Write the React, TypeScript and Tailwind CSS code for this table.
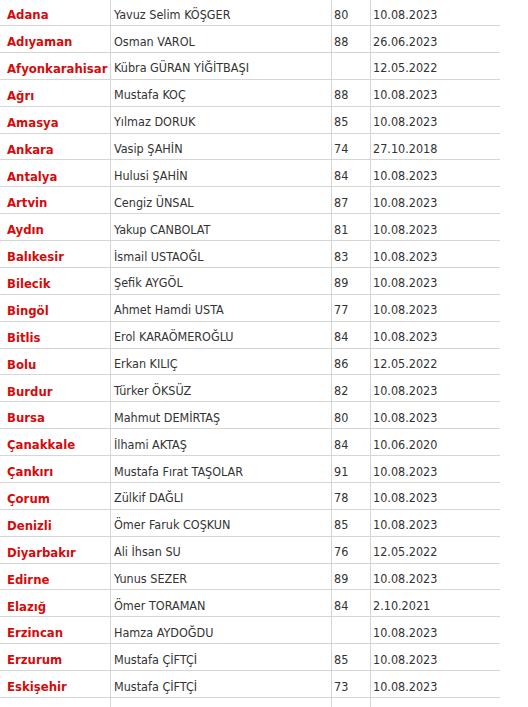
const rows: [string, string, string, string][] = [
  ['Adana', 'Yavuz Selim KÖŞGER', '80', '10.08.2023'],
  ['Adıyaman', 'Osman VAROL', '88', '26.06.2023'],
  ['Afyonkarahisar', 'Kübra GÜRAN YİĞİTBAŞI', '', '12.05.2022'],
  ['Ağrı', 'Mustafa KOÇ', '88', '10.08.2023'],
  ['Amasya', 'Yılmaz DORUK', '85', '10.08.2023'],
  ['Ankara', 'Vasip ŞAHİN', '74', '27.10.2018'],
  ['Antalya', 'Hulusi ŞAHİN', '84', '10.08.2023'],
  ['Artvin', 'Cengiz ÜNSAL', '87', '10.08.2023'],
  ['Aydın', 'Yakup CANBOLAT', '81', '10.08.2023'],
  ['Balıkesir', 'İsmail USTAOĞL', '83', '10.08.2023'],
  ['Bilecik', 'Şefik AYGÖL', '89', '10.08.2023'],
  ['Bingöl', 'Ahmet Hamdi USTA', '77', '10.08.2023'],
  ['Bitlis', 'Erol KARAÖMEROĞLU', '84', '10.08.2023'],
  ['Bolu', 'Erkan KILIÇ', '86', '12.05.2022'],
  ['Burdur', 'Türker ÖKSÜZ', '82', '10.08.2023'],
  ['Bursa', 'Mahmut DEMİRTAŞ', '80', '10.08.2023'],
  ['Çanakkale', 'İlhami AKTAŞ', '84', '10.06.2020'],
  ['Çankırı', 'Mustafa Fırat TAŞOLAR', '91', '10.08.2023'],
  ['Çorum', 'Zülkif DAĞLI', '78', '10.08.2023'],
  ['Denizli', 'Ömer Faruk COŞKUN', '85', '10.08.2023'],
  ['Diyarbakır', 'Ali İhsan SU', '76', '12.05.2022'],
  ['Edirne', 'Yunus SEZER', '89', '10.08.2023'],
  ['Elazığ', 'Ömer TORAMAN', '84', '2.10.2021'],
  ['Erzincan', 'Hamza AYDOĞDU', '', '10.08.2023'],
  ['Erzurum', 'Mustafa ÇİFTÇİ', '85', '10.08.2023'],
  ['Eskişehir', 'Mustafa ÇİFTÇİ', '73', '10.08.2023'],
  ['', '', '', ''],
];

export default function App() {
  return (
    <div className="min-h-screen bg-white font-['DejaVu_Sans_Condensed',sans-serif] text-[12.5px] text-[#333]">
      <div className="mt-[-0.89px] w-[500px]">
        {rows.map(([city, name, score, date], i) => (
          <div
            key={i}
            className="grid h-[26.89px] grid-cols-[110px_221px_39px_130px] border-b border-[#d6d6d6]"
          >
            <div className="flex items-center whitespace-nowrap pl-[7px] pt-[6px] text-[13px] font-bold text-[#d40b0b]">
              {city}
            </div>
            <div className="flex items-center border-l border-[#d6d6d6] pl-[3px] pt-[6px]">
              {name}
            </div>
            <div className="flex items-center border-l border-[#d6d6d6] pl-[2px] pt-[6px]">
              {score}
            </div>
            <div className="flex items-center border-l border-[#d6d6d6] pl-[2px] pt-[6px]">
              {date}
            </div>
          </div>
        ))}
      </div>
    </div>
  );
}
